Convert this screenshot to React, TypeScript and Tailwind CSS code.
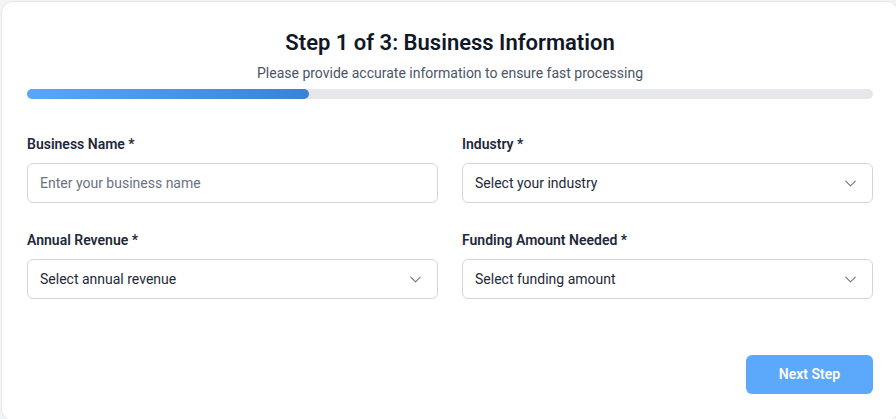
import React from "react";
import { ChevronDown } from "lucide-react";

function SelectBox({ text }: { text: string }) {
  return (
    <div className="flex h-10 items-center justify-between rounded-md border border-gray-300 bg-white pl-[12px] pr-[12px]">
      <span className="text-[14px] text-gray-800">{text}</span>
      <ChevronDown size={19} strokeWidth={1.3} className="text-gray-500" />
    </div>
  );
}

export default function App() {
  return (
    <div className="h-[419px] w-[896px] overflow-hidden bg-gray-100 pl-[1px] pt-[1px]" style={{ fontFamily: "Roboto, 'Noto Sans', sans-serif" }}>
      <div className="h-[420px] w-[898px] rounded-xl border border-gray-200 bg-white px-[25px] pt-[25px]">
        <div className="text-center">
          <h1 className="text-[22px] font-semibold leading-8 text-gray-900">Step 1 of 3: Business Information</h1>
          <p className="mt-1 text-[14px] leading-5 text-gray-600">Please provide accurate information to ensure fast processing</p>
        </div>
        <div className="mt-[6px] h-2.5 w-full rounded-full bg-gray-200">
          <div className="h-full w-1/3 rounded-full bg-gradient-to-r from-[#5ba6f7] to-[#3b82d6]" />
        </div>
        <div className="mt-[35px] grid grid-cols-2 gap-x-6 gap-y-[27px]">
          <div>
            <label className="block text-[14px] font-semibold leading-5 text-gray-800">Business Name *</label>
            <div className="mt-[9px] flex h-10 items-center rounded-md border border-gray-300 bg-white px-[12px]">
              <span className="text-[14px] text-gray-500">Enter your business name</span>
            </div>
          </div>
          <div>
            <label className="block text-[14px] font-semibold leading-5 text-gray-800">Industry *</label>
            <div className="mt-[9px]">
              <SelectBox text="Select your industry" />
            </div>
          </div>
          <div>
            <label className="block text-[14px] font-semibold leading-5 text-gray-800">Annual Revenue *</label>
            <div className="mt-[9px]">
              <SelectBox text="Select annual revenue" />
            </div>
          </div>
          <div>
            <label className="block text-[14px] font-semibold leading-5 text-gray-800">Funding Amount Needed *</label>
            <div className="mt-[9px]">
              <SelectBox text="Select funding amount" />
            </div>
          </div>
        </div>
        <div className="mt-14 flex justify-end">
          <button className="h-[39px] w-[127px] rounded-md bg-[#5ca8fa] text-[14px] font-semibold text-white">Next Step</button>
        </div>
      </div>
    </div>
  );
}
